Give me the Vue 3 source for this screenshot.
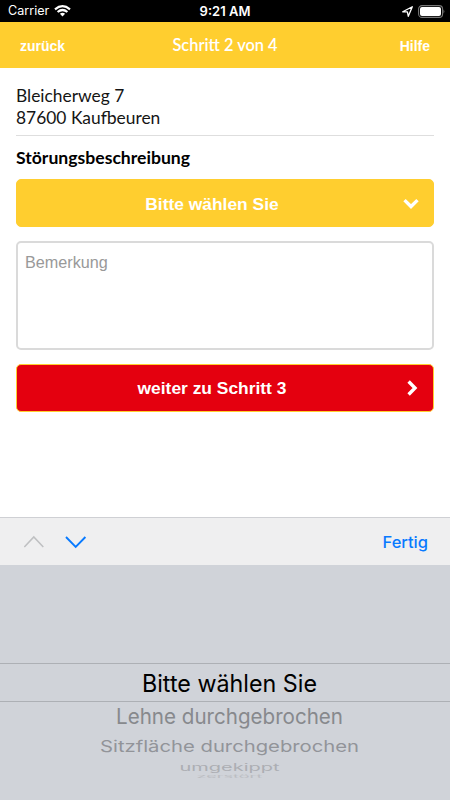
<script setup>
const options = [
  { label: 'Bitte wählen Sie', tone: 'current', width: 175, size: 24, stretch: 1, y: 691.5 },
  { label: 'Lehne durchgebrochen', tone: 'near', width: 227, size: 21.5, stretch: 0.97, y: 724 },
  { label: 'Sitzfläche durchgebrochen', tone: 'mid', width: 259, size: 22, stretch: 0.74, y: 752 },
  { label: 'umgekippt', tone: 'far', width: 100, size: 20, stretch: 0.5, y: 770.5 },
  { label: 'zerstört', tone: 'last', width: 66, size: 20, stretch: 0.2, y: 778.4 }
]
</script>

<template>
  <main class="phone">
    <div class="status">
      <div class="status-left">
        <span class="carrier">Carrier</span>
        <svg class="wifi" width="17" height="12" viewBox="0 0 17 12" fill="none" stroke="#fff" stroke-width="2.2">
          <path d="M1 4.3Q8.5-2 16 4.3M3.6 7Q8.5 3 13.4 7" />
          <path d="M5.9 8.8Q8.5 6.9 11.1 8.8L8.5 11.5Z" fill="#fff" stroke="none" />
        </svg>
      </div>
      <span class="time">9:21 AM</span>
      <div class="status-right">
        <svg width="11" height="11" viewBox="0 0 11 11" fill="none" stroke="#fff" stroke-width="1.3" stroke-linejoin="round">
          <path d="M.7 5.8L10.3 .7L6.3 10.3L5.4 5.9Z" />
        </svg>
        <svg width="27" height="13" viewBox="0 0 27 13">
          <rect x=".6" y=".6" width="24" height="11.8" rx="3.5" fill="none" stroke="#777" stroke-width="1.1" />
          <rect x="2" y="2" width="21" height="9" rx="2" fill="#fff" />
          <path d="M25.5 4.5Q27.2 6.5 25.5 8.5Z" fill="#777" />
        </svg>
      </div>
    </div>

    <header class="bar">
      <a class="bar-link back">zurück</a>
      <h1>Schritt 2 von 4</h1>
      <a class="bar-link help">Hilfe</a>
    </header>

    <section class="form">
      <address>Bleicherweg 7<br>87600 Kaufbeuren</address>
      <h2>Störungsbeschreibung</h2>
      <button class="action choose">
        <span>Bitte wählen Sie</span>
        <svg class="down" width="16" height="11" viewBox="0 0 16 11" fill="none" stroke="#fff" stroke-width="3.4">
          <path d="M1.5 2.1L8 8.5L14.5 2.1" />
        </svg>
      </button>
      <div class="remark">Bemerkung</div>
      <button class="action next">
        <span>weiter zu Schritt 3</span>
        <svg class="right" width="11" height="16" viewBox="0 0 11 16" fill="none" stroke="#fff" stroke-width="3.4">
          <path d="M1.6 1.5L8 8L1.6 14.5" />
        </svg>
      </button>
    </section>

    <div class="toolbar">
      <svg width="64" height="14" viewBox="0 0 64 14" fill="none">
        <path d="M.3 12L9.8 2L19.3 12" stroke="#bfc0c2" stroke-width="1.6" />
        <path d="M42 2L51.7 12L61.4 2" stroke="#087aff" stroke-width="1.9" />
      </svg>
      <span class="done">Fertig</span>
    </div>

    <div class="picker">
      <svg width="450" height="235" viewBox="0 565 450 235">
        <path d="M0 663.5H450M0 701.5H450" stroke="#adb0b5" />
        <text
          v-for="o in options"
          :key="o.label"
          :class="o.tone"
          :transform="`translate(229.5 ${o.y}) scale(1 ${o.stretch})`"
          :font-size="o.size"
          :textLength="o.width"
          lengthAdjust="spacingAndGlyphs"
          text-anchor="middle"
        >{{ o.label }}</text>
      </svg>
    </div>
  </main>
</template>

<style>
body {
  margin: 0;
}
</style>

<style scoped>
.phone {
  width: 450px;
  height: 800px;
  display: flex;
  flex-direction: column;
  overflow: hidden;
  background: #fff;
  color: #000;
  font-family: Lato, sans-serif;
}
.status {
  height: 22px;
  box-sizing: border-box;
  display: grid;
  grid-template-columns: 1fr auto 1fr;
  align-items: center;
  padding: 0 5px 0 8px;
  background: #000;
  color: #fff;
  font: 500 13px/22px Inter, sans-serif;
}
.status-left,
.status-right {
  display: flex;
  align-items: center;
  gap: 5px;
}
.status-right {
  justify-content: flex-end;
}
.carrier {
  font-size: 12.6px;
  font-weight: 400;
}
.time {
  font-weight: 600;
  margin-right: 3px;
}
.bar {
  height: 46px;
  box-sizing: border-box;
  display: grid;
  grid-template-columns: 1fr auto 1fr;
  align-items: center;
  padding: 0 20px 1px;
  background: #ffce2f;
  color: #fff;
}
.bar-link {
  font: 700 14px/20px "Liberation Sans", sans-serif;
  padding-top: 2px;
}
.help {
  text-align: right;
}
h1 {
  margin: 0;
  padding-top: 1px;
  font-size: 16.4px;
  line-height: 22px;
  font-weight: 600;
}
.form {
  padding: 17px 16px 0;
  height: 449px;
  box-sizing: border-box;
}
address {
  height: 50px;
  border-bottom: 1px solid #dedede;
  color: #151515;
  font-size: 17.4px;
  line-height: 22px;
  font-style: normal;
}
h2 {
  margin: 11px 0 10px;
  font-size: 17.6px;
  line-height: 22px;
  font-weight: 700;
}
.action {
  width: 418px;
  height: 48px;
  box-sizing: border-box;
  display: flex;
  align-items: center;
  border: 1px solid #ffce2f;
  border-radius: 5px;
  background: #ffce2f;
  color: #fff;
  font: 700 17.4px/22px "Liberation Sans", sans-serif;
}
.action span {
  flex: 1;
  text-align: center;
}
.choose {
  padding: 1px 14px 0 4px;
}
.next {
  padding: 0 15px 0 0;
  background: #e4000f;
}
.remark {
  width: 418px;
  height: 109px;
  margin: 14px 0;
  box-sizing: border-box;
  padding: 8px 7px;
  border: 2px solid #dadada;
  border-radius: 5px;
  color: #999;
  font: 16.2px/22px "Liberation Sans", sans-serif;
}
.toolbar {
  height: 48px;
  box-sizing: border-box;
  padding: 0 22px 0 24px;
  display: flex;
  align-items: center;
  justify-content: space-between;
  border-top: 1px solid #cfd0d4;
  background: #efeff0;
}
.done {
  color: #087aff;
  font: 500 16.5px/22px Inter, sans-serif;
}
.picker {
  height: 235px;
  background: #d0d3d9;
  font-family: Inter, sans-serif;
}
.picker svg {
  display: block;
}
.current {
  fill: #000;
}
.near {
  fill: #87898d;
}
.mid {
  fill: #929499;
}
.far {
  fill: #acaeb3;
}
.last {
  fill: #bbbdc2;
}
</style>
